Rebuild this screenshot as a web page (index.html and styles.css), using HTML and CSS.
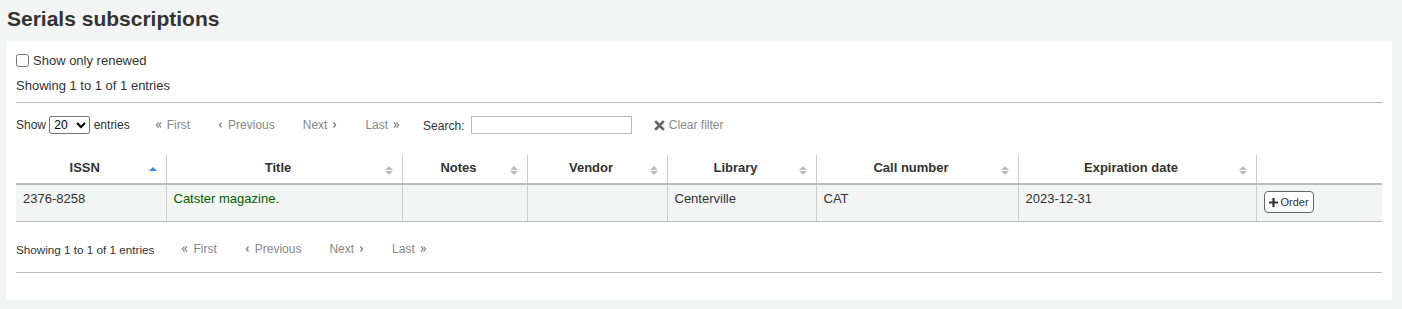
FILE: index.html
```html
<!DOCTYPE html>
<html lang="en">

<head>
	<meta charset="UTF-8">
	<title>Serials subscriptions</title>
	<link rel="stylesheet" href="styles.css">
</head>

<body>
	<h1>Serials subscriptions</h1>
	<div class="page-section">
		<label class="renewed"><input type="checkbox"> Show only renewed</label>
		<div class="info-top">Showing 1 to 1 of 1 entries</div>

		<div class="toolbar">
			<label class="length">Show
				<select>
					<option>20</option>
				</select>
				entries</label>
			<div class="pager">
				<span><svg class="dbl" viewBox="0 0 8 8"><path d="M4 1 L1.5 4 L4 7 M7 1 L4.5 4 L7 7"/></svg>First</span>
				<span><svg class="sgl" viewBox="0 0 5 8"><path d="M3.5 1.5 L1.5 4 L3.5 6.5"/></svg>Previous</span>
				<span>Next<svg class="sgl after" viewBox="0 0 5 8"><path d="M1.5 1.5 L3.5 4 L1.5 6.5"/></svg></span>
				<span>Last<svg class="dbl after" viewBox="0 0 8 8"><path d="M1 1 L3.5 4 L1 7 M4 1 L6.5 4 L4 7"/></svg></span>
			</div>
			<label class="search">Search: <input type="text"></label>
			<span class="clear">
				<svg width="11" height="11" viewBox="0 0 12 12"><path d="M2.3 0.2 L6 3.9 L9.7 0.2 L11.8 2.3 L8.1 6 L11.8 9.7 L9.7 11.8 L6 8.1 L2.3 11.8 L0.2 9.7 L3.9 6 L0.2 2.3 Z" fill="#666"/></svg>
				Clear filter</span>
		</div>

		<table>
			<thead>
				<tr>
					<th class="c-issn sorted">ISSN</th>
					<th class="c-title">Title</th>
					<th class="c-notes">Notes</th>
					<th class="c-vendor">Vendor</th>
					<th class="c-library">Library</th>
					<th class="c-call">Call number</th>
					<th class="c-exp">Expiration date</th>
					<th class="c-act nosort"></th>
				</tr>
			</thead>
			<tbody>
				<tr>
					<td>2376-8258</td>
					<td><a href="#">Catster magazine.</a></td>
					<td></td>
					<td></td>
					<td>Centerville</td>
					<td>CAT</td>
					<td>2023-12-31</td>
					<td><button class="btn"><svg width="9" height="9" viewBox="0 0 9 9"><path d="M3.4 0 H5.6 V3.4 H9 V5.6 H5.6 V9 H3.4 V5.6 H0 V3.4 H3.4 Z" fill="#333"/></svg>Order</button></td>
				</tr>
			</tbody>
		</table>

		<div class="toolbar bottom">
			<span class="info">Showing 1 to 1 of 1 entries</span>
			<div class="pager">
				<span><svg class="dbl" viewBox="0 0 8 8"><path d="M4 1 L1.5 4 L4 7 M7 1 L4.5 4 L7 7"/></svg>First</span>
				<span><svg class="sgl" viewBox="0 0 5 8"><path d="M3.5 1.5 L1.5 4 L3.5 6.5"/></svg>Previous</span>
				<span>Next<svg class="sgl after" viewBox="0 0 5 8"><path d="M1.5 1.5 L3.5 4 L1.5 6.5"/></svg></span>
				<span>Last<svg class="dbl after" viewBox="0 0 8 8"><path d="M1 1 L3.5 4 L1 7 M4 1 L6.5 4 L4 7"/></svg></span>
			</div>
		</div>
	</div>
</body>

</html>
```

FILE: styles.css
```css
* {
	box-sizing: border-box;
}

body {
	margin: 0;
	background: #f3f4f4;
	font-family: 'Liberation Sans', Arial, sans-serif;
	font-size: 13px;
	color: #333;
}

h1 {
	margin: 0;
	padding: 7px 7px 0;
	height: 41px;
	font-size: 21px;
	font-weight: bold;
	color: #333;
}

.page-section {
	background: #fff;
	margin: 0 10px 0 6px;
	padding: 10px 10px 27px;
}

.renewed {
	display: flex;
	align-items: center;
	gap: 4px;
	height: 18px;
}

.renewed input {
	margin: 0;
	width: 13px;
	height: 13px;
}

.info-top {
	margin-top: 9px;
	padding-bottom: 9px;
	border-bottom: 1px solid #bbb;
}

.toolbar {
	display: flex;
	align-items: center;
	height: 44px;
	font-size: 12px;
}

.length select {
	font-size: 12px;
	height: 18px;
	padding: 0;
	margin: 0;
	width: 41px;
	border: 1px solid #767676;
	border-radius: 2px;
	background: #fff;
}

.pager {
	display: flex;
	margin-left: 25px;
	gap: 28px;
	color: #888;
}

.pager span {
	display: flex;
	align-items: center;
}

.pager svg {
	fill: none;
	stroke: #888;
	stroke-width: 1.4;
	margin-right: 5px;
}

.pager svg.after {
	margin: 0 0 0 5px;
}

.pager .dbl {
	width: 7px;
	height: 8px;
}

.pager .sgl {
	width: 5px;
	height: 8px;
}

.search {
	margin-left: 23px;
}

.search input {
	width: 161px;
	height: 18px;
	border: 1px solid #bbb;
	margin-left: 3px;
}

.clear {
	display: flex;
	align-items: center;
	gap: 4px;
	margin-left: 22px;
	color: #888;
}

table {
	width: 100%;
	border-collapse: collapse;
	margin-top: 8px;
	table-layout: fixed;
}

th {
	height: 29px;
	border-bottom: 2px solid #bbb;
	border-left: 1px solid #ccc;
	font-weight: bold;
	position: relative;
	padding: 0 22px 3px 10px;
}

th:first-child {
	border-left: 0;
}

th::before,
th::after {
	content: '';
	position: absolute;
	right: 9px;
	width: 0;
	height: 0;
	border: 4px solid transparent;
}

th::before {
	top: 7px;
	border-bottom-color: #bbb;
}

th::after {
	top: 16px;
	border-top-color: #bbb;
}

th.sorted::before {
	top: 8px;
	border-bottom-color: #3a87d8;
}

th.sorted::after,
th.nosort::before,
th.nosort::after {
	display: none;
}

.c-issn { width: 150px; }
.c-title { width: 236px; }
.c-notes { width: 125px; }
.c-vendor { width: 140px; }
.c-library { width: 149px; }
.c-call { width: 202px; }
.c-exp { width: 238px; }
.c-act { width: 126px; }

td {
	background: #f3f4f4;
	height: 37px;
	vertical-align: top;
	padding: 6px 7px 0;
	border-left: 1px solid #ccc;
	border-bottom: 1px solid #bbb;
}

td:first-child {
	border-left: 0;
}

td a {
	color: #006100;
	text-decoration: none;
}

.btn {
	display: inline-flex;
	align-items: center;
	gap: 3px;
	font-family: inherit;
	font-size: 11px;
	color: #333;
	background: #fff;
	border: 1px solid #666;
	border-radius: 4px;
	height: 22px;
	padding: 0 4px;
	margin-top: 0;
}

.bottom {
	height: 51px;
	padding-top: 5px;
	border-bottom: 1px solid #bbb;
	font-size: 11.7px;
}

.bottom .pager {
	font-size: 12px;
	margin-left: 27px;
}
```
